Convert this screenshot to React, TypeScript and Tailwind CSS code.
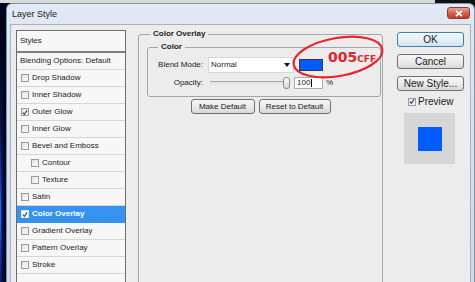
import React from 'react'

type Row = { label: string; checked?: boolean; indent?: boolean; active?: boolean }

const rows: Row[] = [
  { label: 'Drop Shadow' },
  { label: 'Inner Shadow' },
  { label: 'Outer Glow', checked: true },
  { label: 'Inner Glow' },
  { label: 'Bevel and Emboss' },
  { label: 'Contour', indent: true },
  { label: 'Texture', indent: true },
  { label: 'Satin' },
  { label: 'Color Overlay', checked: true, active: true },
  { label: 'Gradient Overlay' },
  { label: 'Pattern Overlay' },
  { label: 'Stroke' },
]

function Check({ checked, light }: { checked?: boolean; light?: boolean }) {
  return (
    <div
      className={
        'w-[8px] h-[8px] shrink-0 border flex items-center justify-center ' +
        (light ? 'border-[#dfe9f5] bg-white' : 'border-[#9a9a9a] bg-gradient-to-br from-[#e2e2e2] to-[#fbfbfb]')
      }
    >
      {checked && (
        <svg width="7" height="7" viewBox="0 0 7 7">
          <path d="M1 3.6 L2.8 5.6 L6 1" fill="none" stroke="#2a3f7a" strokeWidth="1.3" />
        </svg>
      )}
    </div>
  )
}

function Btn({ children, w, ok }: { children: React.ReactNode; w: string; ok?: boolean }) {
  return (
    <div
      className={
        'h-[15px] rounded-[3px] border flex items-center justify-center text-[#1a1a1a] ' +
        w +
        (ok
          ? ' border-[#3c7fb1] bg-gradient-to-b from-[#f4f9fd] via-[#e6f0f8] to-[#d3e3ef]'
          : ' border-[#707070] bg-gradient-to-b from-[#f6f6f6] via-[#ebebeb] to-[#d8d8d8]')
      }
    >
      {children}
    </div>
  )
}

export default function App() {
  return (
    <div className="relative w-[475px] h-[282px] overflow-hidden flex flex-col bg-[#02051a] font-[family-name:'Liberation_Sans',Arial,sans-serif] text-[8px] leading-[10px] text-[#1c1c1c]">
      {/* strip above the dialog */}
      <div className="h-[3px] flex shrink-0">
        <div className="flex-1 bg-[#dadada]" />
        <div className="w-[40px] bg-[#111]" />
      </div>

      <div className="flex flex-1 min-h-0">
        {/* canvas behind */}
        <div className="w-[6px] bg-[radial-gradient(ellipse_at_0%_76%,#4f8dff_0%,#1438b8_12%,#06124a_30%,#02051a_60%)]" />

        {/* dialog window */}
        <div className="w-[469px] flex flex-col rounded-t-[6px] border border-b-0 border-[#8194ab] bg-gradient-to-b from-[#e0e9f4] to-[#cbd9e8] px-[3px]">
          <div className="h-[20px] flex items-start justify-between shrink-0">
            <span className="pl-[2px] mt-[5px] text-[9px] leading-[10px] text-[#1b1b1b]">Layer Style</span>
            <div className="mt-[3px] mr-[1px] w-[23px] h-[12px] rounded-[3px] border border-[#8a3b33] bg-gradient-to-b from-[#e8a294] via-[#d0634f] to-[#bb3e2a] flex items-center justify-center">
              <svg width="8" height="7" viewBox="0 0 8 7">
                <path d="M1 0.8 L7 6.2 M7 0.8 L1 6.2" stroke="#fff" strokeWidth="1.6" />
              </svg>
            </div>
          </div>

          {/* client area */}
          <div className="flex-1 min-h-0 overflow-hidden bg-[#ececec] border border-b-0 border-[#a3b1c2] flex items-start pl-[5px] pt-[4px]">
            {/* styles list */}
            <div className="mt-[1px] w-[110px] h-[260px] border border-b-0 border-[#6d6d6d] bg-[#f7f7f7]">
              <div className="h-[22px] pl-[3px] flex items-center border-b-2 border-[#7e7e7e]">Styles</div>
              <div className="h-[17px] pl-[3px] flex items-center border-b border-[#d6d6d6]">Blending Options: Default</div>
              {rows.map((r) => (
                <div
                  key={r.label}
                  className={
                    'h-[17px] flex items-center gap-[3px] border-b ' +
                    (r.indent ? 'pl-[14px] ' : 'pl-[4px] ') +
                    (r.active ? 'bg-[#3592ee] border-[#3592ee] text-white font-bold' : 'border-[#d6d6d6]')
                  }
                >
                  <Check checked={r.checked} light={r.active} />
                  <span>{r.label}</span>
                </div>
              ))}
            </div>

            {/* Color Overlay group */}
            <fieldset className="ml-[12px] w-[245px] h-[300px] border border-[#a6a6a6] rounded-[3px] flex flex-col">
              <legend className="ml-[11px] px-[3px] font-bold leading-[10px]">Color Overlay</legend>
              <fieldset className="mt-[3px] ml-[8px] mr-[1px] border border-[#a6a6a6] rounded-[3px] pt-[5px] pb-[8px]">
                <legend className="ml-[10px] px-[3px] font-bold leading-[10px]">Color</legend>
                <div className="flex items-center h-[16px]">
                  <span className="w-[55px] text-right">Blend Mode:</span>
                  <div className="ml-[5px] w-[86px] h-[16px] bg-white border border-[#d8d8d8] flex items-center justify-between pl-[2px] pr-[3px]">
                    <span>Normal</span>
                    <svg width="6" height="4" viewBox="0 0 6 4">
                      <path d="M0 0 H6 L3 4 Z" fill="#111" />
                    </svg>
                  </div>
                  <div className="ml-[5px] w-[24px] h-[12px] bg-[#005cff] border border-[#3a3a3a]" />
                </div>
                <div className="mt-[4px] flex items-center h-[11px]">
                  <span className="w-[55px] text-right">Opacity:</span>
                  <div className="relative ml-[5px] w-[86px] h-[12px] flex items-center pl-[2px] pr-[4px]">
                    <div className="flex-1 h-[3px] border-t border-[#a8a8a8] bg-[#e2e2e2]" />
                    <div className="absolute right-[4px] top-0 w-[7px] h-[12px] rounded-[3px] border border-[#8b8b8b] bg-gradient-to-b from-[#fafafa] to-[#d8d8d8]" />
                  </div>
                  <div className="w-[29px] h-[12px] bg-white border border-[#abadb3] flex items-center pl-[2px]">
                    <span>100</span>
                    <span className="ml-[1px] w-[1px] h-[8px] bg-black" />
                  </div>
                  <span className="ml-[3px]">%</span>
                </div>
              </fieldset>
              <div className="mt-[2px] flex justify-center gap-[4px]">
                <Btn w="w-[64px]">Make Default</Btn>
                <Btn w="w-[72px]">Reset to Default</Btn>
              </div>
            </fieldset>

            {/* right column */}
            <div className="ml-[14px] w-[67px] flex flex-col text-[10px] leading-[12px] pt-[3px]">
              <Btn w="w-full" ok>OK</Btn>
              <div className="mt-[7px]">
                <Btn w="w-full">Cancel</Btn>
              </div>
              <div className="mt-[7px]">
                <Btn w="w-full">New Style...</Btn>
              </div>
              <div className="mt-[5px] h-[11px] flex items-center pl-[11px] gap-[2px]">
                <Check checked />
                <span>Preview</span>
              </div>
              <div className="mt-[6px] ml-[7px] w-[51px] h-[51px] bg-[#d6d6d6] flex items-center justify-center">
                <div className="w-[24px] h-[24px] bg-[#005cff]" />
              </div>
            </div>
          </div>
        </div>
      </div>

      {/* red annotation */}
      <svg className="absolute left-[290px] top-[33px]" width="96" height="50" viewBox="0 0 96 50">
        <ellipse cx="48" cy="24" rx="45" ry="19" transform="rotate(-10 48 24)" fill="none" stroke="#e8262a" strokeWidth="2.2" />
      </svg>
      <div className="absolute left-[328px] top-[50px] flex items-baseline font-[family-name:'DejaVu_Sans',sans-serif] font-bold text-[#e3262b] leading-none">
        <span className="text-[14px]">005</span>
        <span className="text-[9px]">CFF</span>
      </div>
    </div>
  )
}
